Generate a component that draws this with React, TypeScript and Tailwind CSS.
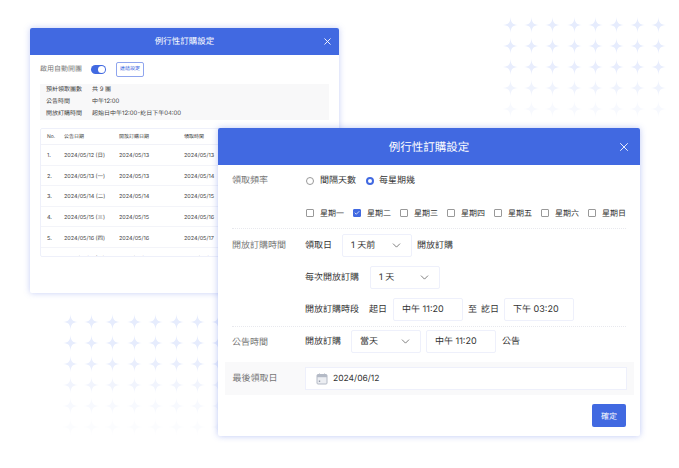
import { Check, ChevronDown, X } from "lucide-react";

const weekdays = ["星期一", "星期二", "星期三", "星期四", "星期五", "星期六", "星期日"];

const scheduleRows = [
    ["1.", "2024/05/12 (日)", "2024/05/13", "2024/05/13"],
    ["2.", "2024/05/13 (一)", "2024/05/13", "2024/05/14"],
    ["3.", "2024/05/14 (二)", "2024/05/14", "2024/05/15"],
    ["4.", "2024/05/15 (三)", "2024/05/15", "2024/05/16"],
    ["5.", "2024/05/16 (四)", "2024/05/16", "2024/05/17"],
    ["6.", "2024/05/17 (五)", "2024/05/17", "2024/05/18"],
];

const Star = () => (
    <svg width="15" height="16" viewBox="0 0 15 16" className="block shrink-0">
        <path d="M7.5 0 C7.9 5.6 9 7.4 15 8 C9 8.6 7.9 10.4 7.5 16 C7.1 10.4 6 8.6 0 8 C6 7.4 7.1 5.6 7.5 0 Z" fill="#e6ecfd" />
    </svg>
);

const StarGrid = ({ cols, fades, className }: { cols: number; fades: number[]; className: string }) => (
    <div className={className}>
        {fades.map((fade, row) => (
            <div key={row} className="flex gap-[6.2px] h-[16px]" style={{ opacity: fade }}>
                {Array.from({ length: cols }).map((_, col) => (
                    <Star key={col} />
                ))}
            </div>
        ))}
    </div>
);

const Select = ({ value, className = "" }: { value: string; className?: string }) => (
    <div className={`shrink-0 w-[70px] h-[23px] border border-[#eef0fb] rounded-[2px] pl-[8px] pr-[8px] flex items-center justify-between text-[#333] ${className}`}>
        <span>{value}</span>
        <ChevronDown size={13} strokeWidth={1.25} className="text-[#444]" />
    </div>
);

const TimeBox = ({ value }: { value: string }) => (
    <div className="shrink-0 w-[70px] h-[23px] border border-[#eef0fb] rounded-[2px] pl-[8px] flex items-center text-[#333]">{value}</div>
);

const BackWindow = () => (
    <div className="absolute left-[30px] top-[28px] w-[309px] h-[265px] bg-white rounded-[2px] shadow-[0_0_6px_rgba(90,115,230,0.35)] overflow-hidden">
        <div className="h-[27px] pt-[1px] bg-[#4169e1] text-white text-[8.5px] relative flex items-center justify-center">
            例行性訂購設定
            <X size={11} strokeWidth={2} className="absolute right-[6.5px] top-[8px]" />
        </div>
        <div className="px-[10px]">
            <div className="h-[29px] flex items-center text-[7px] text-[#777]">
                <span className="w-[51px] shrink-0">啟用自動開團</span>
                <span className="w-[15px] h-[9px] rounded-full bg-[#4169e1] flex items-center justify-end pr-[1px]">
                    <span className="w-[7px] h-[7px] rounded-full bg-white" />
                </span>
                <span className="ml-[10px] w-[28px] h-[15px] border border-[#8fa5ee] rounded-[2px] flex items-center justify-center text-[5px] text-[#4169e1]">連結設定</span>
            </div>
            <div className="h-[36px] bg-[#f8f8f9] px-[6px] flex flex-col justify-center gap-[5.5px] text-[6px] leading-[6.5px] text-[#444]">
                <div className="flex"><span className="w-[46px]">預計領取團數</span><span>共 9 團</span></div>
                <div className="flex"><span className="w-[46px]">公告時間</span><span>中午12:00</span></div>
                <div className="flex"><span className="w-[46px]">開放訂購時間</span><span>起始日中午12:00-訖日下午04:00</span></div>
            </div>
            <div className="mt-[8px] h-[129px] border border-[#eef0fa] rounded-[2px] overflow-hidden text-[5.5px] text-[#444]">
                <div className="h-[16px] flex items-center pl-[6px] pt-[3px] text-[5px] border-b border-[#f1f2f8]">
                    <span className="w-[17px]">No.</span>
                    <span className="w-[55px]">公告日期</span>
                    <span className="w-[65px]">開放訂購日期</span>
                    <span>領取時間</span>
                </div>
                {scheduleRows.map((row) => (
                    <div key={row[0]} className="h-[20.6px] shrink-0 flex items-center pl-[6px] pt-[3px] border-b border-[#f3f4f9]">
                        <span className="w-[17px]">{row[0]}</span>
                        <span className="w-[55px]">{row[1]}</span>
                        <span className="w-[65px]">{row[2]}</span>
                        <span>{row[3]}</span>
                    </div>
                ))}
            </div>
        </div>
    </div>
);

const FrontWindow = () => (
    <div className="absolute left-[218px] top-[128px] w-[422px] h-[308px] bg-white rounded-[2px] shadow-[0_0_6px_rgba(90,115,230,0.4)] overflow-hidden text-[9px] leading-[12px] text-[#333]">
        <div className="h-[37px] bg-[#4169e1] text-white text-[11.5px] relative flex items-center justify-center">
            例行性訂購設定
            <X size={14} strokeWidth={1.5} className="absolute right-[9.5px] top-[11.5px]" />
        </div>

        <div className="px-[14px]">
            <div className="flex h-[64px] border-b border-dotted border-[#e8e9ee]">
                <span className="w-[73px] shrink-0 pt-[10px] text-[#777]">領取頻率</span>
                <div className="flex-1 min-w-0">
                    <div className="h-[32px] flex items-center pl-[1px]">
                        <span className="w-[8px] h-[8px] rounded-full border border-[#999] mr-[6px]" />
                        <span>間隔天數</span>
                        <span className="w-[8px] h-[8px] rounded-full border-[2.5px] border-[#4169e1] ml-[10px] mr-[5px]" />
                        <span>每星期幾</span>
                    </div>
                    <div className="flex gap-[9px] pl-[1px] h-[31px] items-center text-[8px]">
                        {weekdays.map((day) => {
                            const checked = day === "星期二";
                            return (
                                <div key={day} className="flex items-center gap-[6px]">
                                    <span className={`w-[8px] h-[8px] rounded-[1px] border flex items-center justify-center ${checked ? "bg-[#4169e1] border-[#4169e1]" : "border-[#999]"}`}>
                                        {checked && <Check size={6} strokeWidth={3} className="text-white" />}
                                    </span>
                                    <span className="whitespace-nowrap">{day}</span>
                                </div>
                            );
                        })}
                    </div>
                </div>
            </div>

            <div className="flex h-[98px] pt-[5px] border-b border-dotted border-[#e8e9ee]">
                <span className="w-[73px] shrink-0 pt-[5.5px] text-[#777]">開放訂購時間</span>
                <div className="flex-1 flex flex-col gap-[9px]">
                    <div className="flex items-center">
                        領取日
                        <Select value="1 天前" className="ml-[10px] mr-[5px]" />
                        開放訂購
                    </div>
                    <div className="flex items-center">
                        每次開放訂購
                        <Select value="1 天" className="ml-[11px]" />
                    </div>
                    <div className="flex items-center">
                        開放訂購時段
                        <span className="ml-[10px] mr-[6px]">起日</span>
                        <TimeBox value="中午 11:20" />
                        <span className="ml-[5px] mr-[4px]">至</span>
                        <span className="mr-[5px]">訖日</span>
                        <TimeBox value="下午 03:20" />
                    </div>
                </div>
            </div>

            <div className="flex h-[32px] pt-[3px]">
                <span className="w-[73px] shrink-0 pt-[6.5px] text-[#777]">公告時間</span>
                <div className="flex items-start">
                    <span className="pt-[6px]">開放訂購</span>
                    <Select value="當天" className="ml-[10px] mr-[5px]" />
                    <TimeBox value="中午 11:20" />
                    <span className="ml-[6px] pt-[6px]">公告</span>
                </div>
            </div>
        </div>

        <div className="mx-[6.5px] mt-[3px] h-[33px] bg-[#f9f9fa] flex items-center pl-[8px] pr-[7px]">
            <span className="w-[72.5px] shrink-0 text-[#777]">最後領取日</span>
            <div className="flex-1 h-[23px] bg-white border border-[#eef0fb] flex items-center pl-[10px] gap-[5px] text-[8.5px]">
                <svg width="12" height="12" viewBox="0 0 12 12">
                    <rect x="1" y="1.5" width="10" height="9.5" rx="1" fill="#eceef2" stroke="#b4bac6" strokeWidth="1" />
                    <rect x="1" y="2" width="10" height="2.2" fill="#b4bac6" />
                    <rect x="3" y="0.5" width="1" height="2" fill="#b4bac6" />
                    <rect x="8" y="0.5" width="1" height="2" fill="#b4bac6" />
                    <rect x="2.8" y="7.5" width="1.4" height="1.4" fill="#8f96a5" />
                </svg>
                2024/06/12
            </div>
        </div>

        <div className="flex justify-end pr-[14px] pt-[9px]">
            <div className="w-[34px] h-[23px] rounded-[2px] bg-[#4169e1] text-white text-[8px] flex items-center justify-center">確定</div>
        </div>
    </div>
);

const App = () => {
    return (
        <div className="relative w-[679px] h-[468px] overflow-hidden bg-white [text-rendering:geometricPrecision] font-['Inter','Noto_Sans_CJK_TC',sans-serif]">
            <StarGrid
                cols={8}
                fades={[1, 1, 0.9, 0.6, 0.3]}
                className="absolute left-[503px] top-[17px] flex flex-col gap-[5px]"
            />
            <StarGrid
                cols={8}
                fades={[1, 1, 0.85, 0.55, 0.3, 0.12]}
                className="absolute left-[63px] top-[314px] flex flex-col gap-[5px]"
            />
            <BackWindow />
            <FrontWindow />
        </div>
    );
};

export default App;
